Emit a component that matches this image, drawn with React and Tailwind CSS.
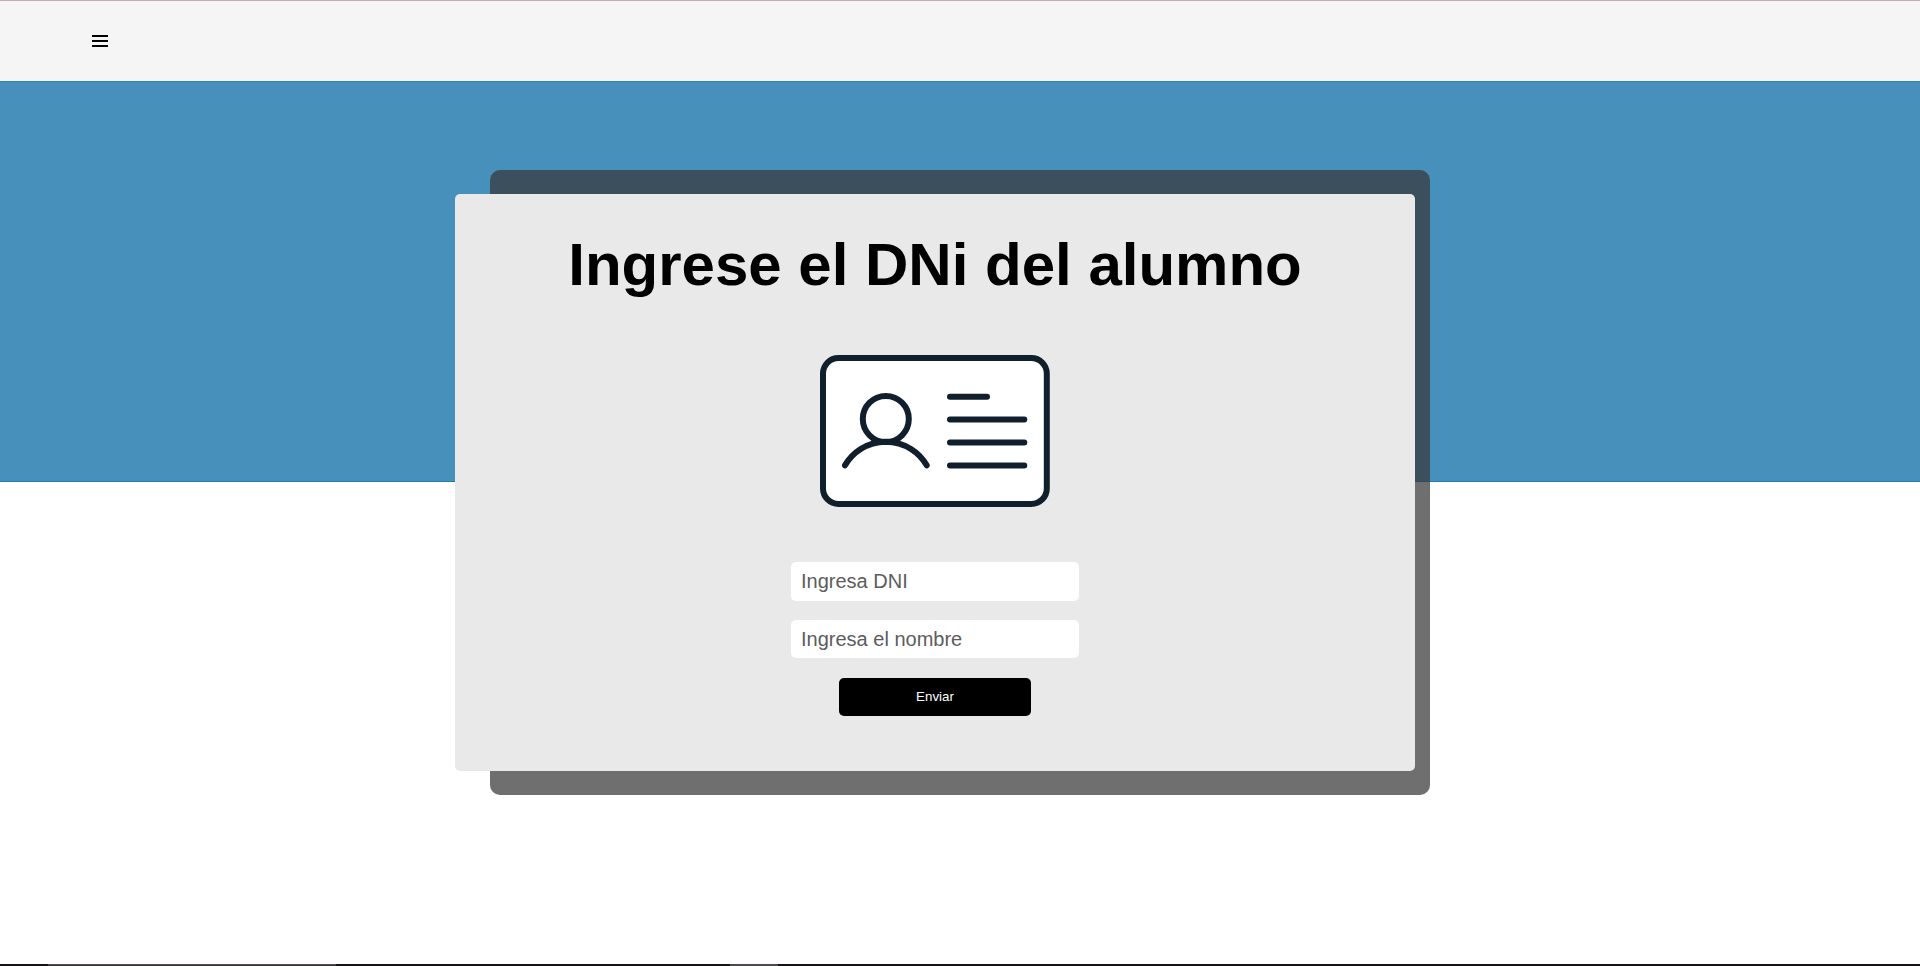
function IdCardIcon() {
  return (
    <svg
      className="mt-[55px] h-[154px] w-[232px] shrink-0"
      viewBox="819 354 232 154"
      fill="none"
      stroke="#111f2c"
      strokeWidth="6"
      strokeLinecap="round"
    >
      <rect x="823" y="358" width="223.8" height="146" rx="15.5" fill="#fff" />
      <circle cx="885.8" cy="419" r="23" />
      <path d="M845 465.3A47.2 47.2 0 0 1 926.7 465.3" />
      <path d="M950 396.7H987M950 419.5H1024.3M950 442.4H1024.3M950 465.4H1024.3" />
    </svg>
  );
}

function Header() {
  return (
    <header className="flex h-[81px] shrink-0 items-center border-t border-[#c9a9b4] bg-[#f5f5f5] pl-[92px]">
      <button type="button" aria-label="Menu" className="flex w-4 flex-col gap-[3px]">
        <span className="h-0.5 bg-black" />
        <span className="h-0.5 bg-black" />
        <span className="h-0.5 bg-black" />
      </button>
    </header>
  );
}

export default function App() {
  const field =
    "w-[288px] shrink-0 rounded-[5px] bg-white px-2.5 text-[20px] text-black outline-none placeholder:text-[#5c5c5c]";
  return (
    <div className="relative flex h-[966px] flex-col overflow-hidden bg-white font-['Liberation_Sans',Arial,sans-serif]">
      <Header />
      <main className="relative flex-1">
        <div className="h-[401px] border-y border-t-[#2f84b3] border-b-[#1d80b4] bg-[#4790bc]" />
        <div className="absolute top-[89px] left-[490px] h-[625px] w-[940px] rounded-[10px] bg-[#383838]/72" />
        <form className="absolute top-[113px] left-[455px] flex h-[577px] w-[960px] flex-col items-center rounded-[5px] bg-[#e9e9e9]">
          <h1 className="mt-[36px] text-[60px] leading-[69px] font-bold text-black">
            Ingrese el DNi del alumno
          </h1>
          <IdCardIcon />
          <input className={`${field} mt-[54px] h-[39px]`} placeholder="Ingresa DNI" />
          <input className={`${field} mt-[19px] h-[38px]`} placeholder="Ingresa el nombre" />
          <button
            type="button"
            className="mt-[20px] h-[38px] w-[192px] shrink-0 rounded-[5px] bg-black text-[13.333px] text-white"
          >
            Enviar
          </button>
        </form>
      </main>
      <footer className="flex h-0.5 shrink-0 bg-[#161316]">
        <span className="ml-12 w-72 border-t border-[#555255] bg-[#383538]" />
        <span className="ml-[394px] w-12 bg-[#4b494b]" />
      </footer>
    </div>
  );
}
